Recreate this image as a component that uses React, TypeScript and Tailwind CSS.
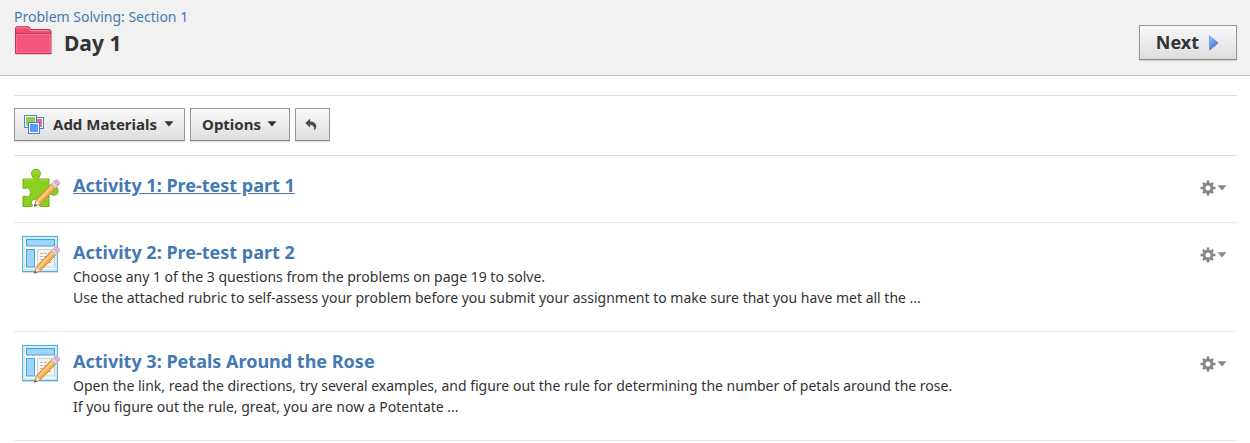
interface Material {
  id: number
  title: string
  kind: 'discussion' | 'assignment'
  description?: string[]
  active?: boolean
}

const materials: Material[] = [
  { id: 1, title: 'Activity 1: Pre-test part 1', kind: 'discussion', active: true },
  {
    id: 2,
    title: 'Activity 2: Pre-test part 2',
    kind: 'assignment',
    description: [
      'Choose any 1 of the 3 questions from the problems on page 19 to solve.',
      'Use the attached rubric to self-assess your problem before you submit your assignment to make sure that you have met all the ...',
    ],
  },
  {
    id: 3,
    title: 'Activity 3: Petals Around the Rose',
    kind: 'assignment',
    description: [
      'Open the link, read the directions, try several examples, and figure out the rule for determining the number of petals around the rose.',
      'If you figure out the rule, great, you are now a Potentate ...',
    ],
  },
]

const buttonStyle =
  'flex items-center border border-[#999] border-b-[#888] bg-linear-to-b from-[#f9f9f9] to-[#dedede] font-bold text-[#333] shadow-[0_1px_1px_rgba(0,0,0,0.12)]'

function FolderIcon() {
  return (
    <svg width="38" height="30" viewBox="0 0 38 30" aria-hidden="true">
      <path d="M1.5 27.5V2.5Q1.5 0.7 3 0.7H14Q15.5 0.7 16.2 2.3L17 3.5H35Q37 3.5 37 5.5V27.5Z" fill="#ee4d72" stroke="#c23457" />
      <path d="M2.5 3Q2.5 1.8 3.5 1.8H13.5Q14.6 1.8 15.2 3L16.4 4.6H35.5" fill="none" stroke="#f787a2" />
      <path d="M2 7.5H36.5V27H2Z" fill="#f4577b" />
      <path d="M2 7.5H36.5" fill="none" stroke="#c93a5c" />
      <path d="M2.5 8.5V26.5H36V8.5Z" fill="none" stroke="#f8728f" />
      <path d="M1 27.5H37.5" stroke="#c9385a" />
      <path d="M2 28.5H37" stroke="#000" strokeOpacity="0.12" />
    </svg>
  )
}

function Pencil() {
  return (
    <g>
      <path d="M12.5 38.2L14.3 31.7L29.8 15.6L34 19.8L18.5 35.8Z" fill="#f5aa4e" stroke="#b58140" strokeWidth="0.8" strokeLinejoin="round" />
      <path d="M15.7 32.3L30.2 17.2L31.6 18.4L17 33.6Z" fill="#ffd084" />
      <path d="M12.5 38.2L14.3 31.7Q17.5 32 18.5 35.8Z" fill="#f6dcb5" stroke="#a98259" strokeWidth="0.5" />
      <path d="M12.2 38.6L13 35.7L15 37.4Z" fill="#555" />
      <path d="M29.3 16.1L31.8 13.5L36 17.7L33.5 20.3Z" fill="#d5dade" stroke="#a3a9ae" strokeWidth="0.6" />
      <path d="M31.8 13.5L32.8 12.5Q34.6 11 36.6 13Q38.6 15 37 16.8L36 17.7Z" fill="#ecb2d3" stroke="#c98bb0" strokeWidth="0.7" />
    </g>
  )
}

function PuzzleIcon() {
  return (
    <svg width="40" height="40" viewBox="0 0 40 40" aria-hidden="true">
      <path
        d="M1 11H10.5Q11.8 11 11 9.3Q9.6 7.4 9.6 5.6Q9.6 1.4 14 1.4Q18.4 1.4 18.4 5.6Q18.4 7.4 17 9.3Q16.2 11 17.5 11H27V18.5Q27 20 28.8 19Q30.3 18 32 18Q36 18.2 36 22.6Q36 27 32 27.2Q30.3 27.2 28.8 26.2Q27 25.2 27 26.8V38.5H18.5Q17 38.5 17.8 36.8Q18.8 35.5 18.5 33.7Q17.8 31 14 31Q10.2 31 9.5 33.7Q9.2 35.5 10.2 36.8Q11 38.5 9.5 38.5H1V29Q1 27.4 2.7 28.1Q4.3 29 5.8 28.7Q8.7 27.8 8.7 24.3Q8.7 20.8 5.8 20Q4.3 19.7 2.7 20.6Q1 21.3 1 19.7Z"
        fill="#8bd01c"
        stroke="#6fae1f"
      />
      <path d="M2 12H11.5M10.8 5.5Q10.8 2.6 14 2.6Q17.2 2.6 17.2 5.5M18 12H26" fill="none" stroke="#a5e03c" />
      <Pencil />
    </svg>
  )
}

function AssignmentIcon() {
  return (
    <svg width="40" height="40" viewBox="0 0 40 40" aria-hidden="true">
      <path d="M1 37.5H36" stroke="#000" strokeOpacity="0.12" />
      <rect x="0.7" y="1.5" width="34.6" height="35" fill="#fff" stroke="#58acd9" strokeWidth="1.2" />
      <rect x="2" y="3" width="32" height="32" fill="none" stroke="#c9e8f8" strokeWidth="1.6" />
      <rect x="4.5" y="4.5" width="28" height="6.5" fill="#9cd5fa" stroke="#4ba3d4" />
      <rect x="4.5" y="14.5" width="8" height="17.5" fill="#9cd5fa" stroke="#4ba3d4" />
      <rect x="15.5" y="14.5" width="17" height="17.5" fill="#f4f4f4" stroke="#cfcfcf" />
      <path d="M18 18.5H29M18 21.5H28M18 24.5H30M18 27.5H30" stroke="#b5b5b5" strokeDasharray="3 1" />
      <Pencil />
    </svg>
  )
}

function MaterialsIcon() {
  return (
    <svg width="20" height="20" viewBox="0 0 20 20" aria-hidden="true">
      <rect x="8.5" y="2.5" width="11" height="11" fill="#fff" stroke="#4784c4" />
      <rect x="10" y="4" width="8" height="8" fill="#f06a74" />
      <rect x="0.5" y="0.5" width="12" height="12" fill="#fff" stroke="#4784c4" />
      <rect x="2" y="2" width="9" height="9" fill="#92d050" />
      <rect x="4.5" y="7.5" width="11" height="11" fill="#fff" stroke="#4784c4" />
      <rect x="6" y="9" width="8" height="8" fill="#5a9bff" />
    </svg>
  )
}

function Caret({ className = '' }: { className?: string }) {
  return (
    <svg width="10" height="6" viewBox="0 0 10 6" className={className} aria-hidden="true">
      <path d="M0.5 0.3H9.5L5 5.4Z" fill="currentColor" />
    </svg>
  )
}

function BackIcon() {
  return (
    <svg width="12" height="13" viewBox="0 0 12 13" aria-hidden="true">
      <path d="M0.3 5L5 0.8V3.3Q11.3 4 11.3 8.6Q11.2 11.3 8.6 12.2Q9.4 10.6 9 9.2Q8.3 7.2 5 6.8V9.4Z" fill="#4a4a4a" />
    </svg>
  )
}

function GearIcon() {
  return (
    <svg width="16" height="16" viewBox="0 0 16 16" aria-hidden="true">
      <g stroke="#888" strokeWidth="2.6">
        <path d="M8 0.5V4M8 12V15.5M0.5 8H4M12 8H15.5" />
        <path d="M2.9 2.9L5.2 5.2M10.8 10.8L13.1 13.1M13.1 2.9L10.8 5.2M5.2 10.8L2.9 13.1" strokeWidth="2.3" />
      </g>
      <circle cx="8" cy="8" r="4" fill="none" stroke="#888" strokeWidth="3" />
    </svg>
  )
}

function MaterialRow({ material }: { material: Material }) {
  return (
    <li className="flex items-start border-b border-[#e6e6e6] pr-2.5 pl-2">
      <div className="mt-3 shrink-0">
        {material.kind === 'discussion' ? <PuzzleIcon /> : <AssignmentIcon />}
      </div>
      <div className="ml-[11px] min-w-0 flex-1 pt-[17px] pb-[23px]">
        <h2 className="pb-0.5 text-[18px] leading-6 font-bold">
          <a href="#" className={material.active ? 'text-[#4479b3] underline' : 'text-[#4479b3] hover:underline'}>
            {material.title}
          </a>
        </h2>
        {material.description?.map((line) => (
          <p key={line} className="text-[14px] leading-[21px]">
            {line}
          </p>
        ))}
      </div>
      <button type="button" aria-label={`Options for ${material.title}`} className="mt-6 flex shrink-0 items-center gap-px text-[#888]">
        <GearIcon />
        <Caret />
      </button>
    </li>
  )
}

export default function App() {
  return (
    <div className="bg-white font-['Noto_Sans',sans-serif] text-[#333]">
      {/* Folder header */}
      <header className="flex items-start justify-between border-b border-[#c4c4c4] bg-[#f1f1f1] pt-[7px] pr-[13px] pb-[15px] pl-3.5">
        <div>
          <a href="#" className="block text-[14px] leading-[19px] text-[#4479b3]">
            Problem Solving: Section 1
          </a>
          <div className="flex h-[33px] items-start gap-3">
            <FolderIcon />
            <h1 className="pt-[3px] text-[21px] leading-7 font-bold">Day 1</h1>
          </div>
        </div>
        <button type="button" className={`${buttonStyle} mt-[18px] h-[35px] gap-2.5 pr-[17px] pl-4 text-[18px]`}>
          Next
          <svg width="10" height="16" viewBox="0 0 10 16" aria-hidden="true">
            <defs>
              <linearGradient id="next" x1="0" y1="0" x2="0.6" y2="1">
                <stop offset="0" stopColor="#a3cbf7" />
                <stop offset="1" stopColor="#2c6bd8" />
              </linearGradient>
            </defs>
            <path d="M0.5 0.8L9.3 8L0.5 15.2Z" fill="url(#next)" stroke="#5b90dd" strokeWidth="0.7" />
          </svg>
        </button>
      </header>

      <main className="pt-[19px] pr-[13px] pl-3.5">
        {/* Toolbar */}
        <div className="flex gap-[5px] border-y border-[#ddd] pt-3 pb-3.5">
          <button type="button" className={`${buttonStyle} h-[33px] pr-2.5 pl-[9px] text-[15px]`}>
            <MaterialsIcon />
            <span className="ml-[9px]">Add Materials</span>
            <Caret className="mb-0.5 ml-[7px]" />
          </button>
          <button type="button" className={`${buttonStyle} h-[33px] pr-3 pl-[11px] text-[15px]`}>
            Options
            <Caret className="mb-0.5 ml-1.5" />
          </button>
          <button type="button" aria-label="Back" className={`${buttonStyle} h-[33px] pr-3 pl-[9px]`}>
            <BackIcon />
          </button>
        </div>

        {/* Materials */}
        <ul>
          {materials.map((material) => (
            <MaterialRow key={material.id} material={material} />
          ))}
        </ul>
      </main>
    </div>
  )
}
